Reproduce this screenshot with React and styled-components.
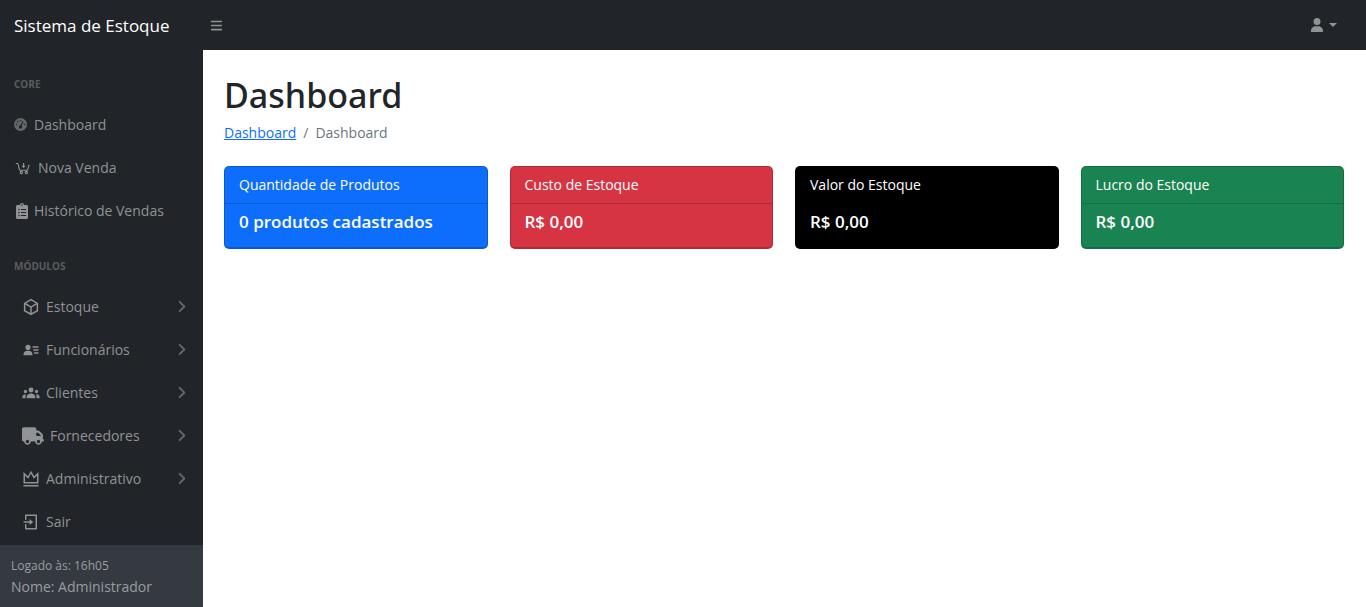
import React from "react";
import styled, { createGlobalStyle } from "styled-components";
import { FaUser, FaBars, FaAngleRight, FaGaugeHigh, FaTruck } from "react-icons/fa6";
import { FaClipboardList } from "react-icons/fa";
import { RiLoginBoxLine, RiBox3Line } from "react-icons/ri";
import { BiSolidUserDetail } from "react-icons/bi";
import { LiaCartArrowDownSolid } from "react-icons/lia";

const Global = createGlobalStyle`
  *, *::before, *::after { box-sizing: border-box; }
  body {
    margin: 0;
    background: #fff;
    color: #212529;
    font: 400 14px/22px "Open Sans", "Segoe UI", sans-serif;
  }
`;

const Page = styled.div`
  min-height: 100vh;
  display: grid;
  grid-template-columns: 203px 1fr;
  grid-template-rows: 50px 1fr;
`;

const TopBar = styled.header`
  grid-column: 1 / -1;
  display: flex;
  align-items: center;
  padding-right: 22px;
  background: #212529;
  color: #909294;
`;

const Brand = styled.a`
  width: 203px;
  padding: 1px 0 0 14px;
  color: #fff;
  font-size: 17px;
  line-height: 26px;
  text-decoration: none;
`;

const BarButton = styled.button`
  display: flex;
  align-items: center;
  gap: 5px;
  padding: 7px;
  margin-left: ${(p) => (p.$end ? "auto" : "0")};
  border: 0;
  background: none;
  color: inherit;
  font-size: ${(p) => (p.$end ? 14 : 13)}px;
  cursor: pointer;
`;

const Caret = styled.span`
  border: 4px solid transparent;
  border-top-color: currentColor;
  border-bottom: 0;
`;

const SideNav = styled.aside`
  display: flex;
  flex-direction: column;
  background: #212529;
  color: #909294;
`;

const Menu = styled.nav`
  flex: 1;
`;

const MenuHeading = styled.h2`
  margin: 0;
  padding: 26px 14px 11px;
  color: #595c5f;
  font-size: 10px;
  font-weight: 700;
  line-height: 16px;
  text-transform: uppercase;
`;

const MenuList = styled.ul`
  margin: 0;
  padding: 0;
  list-style: none;
`;

const MenuLink = styled.a`
  display: flex;
  align-items: center;
  gap: 6px;
  height: 43px;
  padding: 0 14px 0 ${(p) => (p.$nested ? 22 : 14)}px;
  color: inherit;
  text-decoration: none;
`;

const IconBox = styled.span`
  display: flex;
  flex: none;
  width: ${(p) => p.$width}px;
  font-size: ${(p) => p.$size}px;
  color: ${(p) => (p.$dim ? "#65686b" : "inherit")};

  svg {
    flex: none;
  }
`;

const Chevron = styled(FaAngleRight)`
  margin-left: auto;
  color: #65686b;
  font-size: 15px;
`;

const SideFooter = styled.footer`
  padding: 10px 11px;
  background: #343a40;
  color: #999da0;
  line-height: 21px;
`;

const LoginTime = styled.div`
  font-size: 12px;
`;

const Main = styled.main`
  padding: 22px 22px 0 21px;
`;

const Title = styled.h1`
  margin: 0;
  font-family: "Noto Sans", "Open Sans", sans-serif;
  font-size: 34px;
  font-weight: 500;
  line-height: 46px;
`;

const Breadcrumb = styled.ol`
  display: flex;
  gap: 7px;
  margin: 4px 0 22px;
  padding: 0;
  list-style: none;
  color: #6c757d;
`;

const CrumbLink = styled.a`
  color: #0d6efd;
`;

const Cards = styled.div`
  display: grid;
  grid-template-columns: repeat(4, 1fr);
  gap: 22px;
`;

const Card = styled.section`
  border: 1px solid rgba(0, 0, 0, 0.18);
  border-bottom-width: 2px;
  border-radius: 5px;
  background: ${(p) => p.$color};
  color: #fff;
`;

const CardHeader = styled.h2`
  margin: 0;
  padding: 7px 14px;
  border-bottom: 1px solid rgba(0, 0, 0, 0.18);
  font-size: 14px;
  font-weight: 400;
  line-height: 22px;
`;

const CardValue = styled.p`
  margin: 0;
  padding: 7px 14px 14px;
  font-size: 17px;
  font-weight: 600;
  line-height: 22px;
`;

function CrownIcon(props) {
  return (
    <svg width="1em" height="1em" viewBox="0 0 24 24" fill="none" stroke="currentColor" strokeWidth="2" {...props}>
      <path d="M3 5l5 5 4-7 4 7 5-5v12H3z" />
      <path d="M2 21h20" />
    </svg>
  );
}

function PeopleIcon(props) {
  return (
    <svg width="1em" height="1em" viewBox="0 0 24 24" fill="currentColor" {...props}>
      <circle cx="12" cy="8" r="3.3" />
      <circle cx="4.6" cy="10" r="2.2" />
      <circle cx="19.4" cy="10" r="2.2" />
      <path d="M6.3 19v-2.2c0-2.6 2.3-4.3 5.7-4.3s5.7 1.7 5.7 4.3V19z" />
      <path d="M.6 19v-2c0-2 1.6-3.4 4.7-3.4-.4.8-.6 1.7-.6 2.9V19z" />
      <path d="M23.4 19v-2c0-2-1.6-3.4-4.7-3.4.4.8.6 1.7.6 2.900V19z" />
    </svg>
  );
}

const coreItems = [
  { label: "Dashboard", icon: FaGaugeHigh, size: 13, width: 14, dim: true },
  { label: "Nova Venda", icon: LiaCartArrowDownSolid, size: 18, width: 18 },
  { label: "Histórico de Vendas", icon: FaClipboardList, size: 16, width: 14 },
];

const moduleItems = [
  { label: "Estoque", icon: RiBox3Line, size: 18, width: 18, more: true },
  { label: "Funcionários", icon: BiSolidUserDetail, size: 18, width: 18, more: true },
  { label: "Clientes", icon: PeopleIcon, size: 18, width: 18, more: true },
  { label: "Fornecedores", icon: FaTruck, size: 22, width: 22, more: true },
  { label: "Administrativo", icon: CrownIcon, size: 18, width: 18, more: true },
  { label: "Sair", icon: RiLoginBoxLine, size: 18, width: 18 },
];

const cards = [
  { title: "Quantidade de Produtos", value: "0 produtos cadastrados", color: "#0d6efd" },
  { title: "Custo de Estoque", value: "R$ 0,00", color: "#d63343" },
  { title: "Valor do Estoque", value: "R$ 0,00", color: "#000" },
  { title: "Lucro do Estoque", value: "R$ 0,00", color: "#198451" },
];

function MenuSection({ title, items, nested }) {
  return (
    <>
      <MenuHeading>{title}</MenuHeading>
      <MenuList>
        {items.map(({ label, icon: Icon, size, width, dim, more }) => (
          <li key={label}>
            <MenuLink href="#" $nested={nested}>
              <IconBox $size={size} $width={width} $dim={dim}>
                <Icon aria-hidden="true" />
              </IconBox>
              {label}
              {more && <Chevron aria-hidden="true" />}
            </MenuLink>
          </li>
        ))}
      </MenuList>
    </>
  );
}

export default function App() {
  return (
    <>
      <Global />
      <Page>
        <TopBar>
          <Brand href="#">Sistema de Estoque</Brand>
          <BarButton type="button" aria-label="Alternar menu">
            <FaBars />
          </BarButton>
          <BarButton type="button" aria-label="Conta" $end>
            <FaUser />
            <Caret />
          </BarButton>
        </TopBar>
        <SideNav>
          <Menu>
            <MenuSection title="Core" items={coreItems} />
            <MenuSection title="Módulos" items={moduleItems} nested />
          </Menu>
          <SideFooter>
            <LoginTime>Logado às: 16h05</LoginTime>
            <div>Nome: Administrador</div>
          </SideFooter>
        </SideNav>
        <Main>
          <Title>Dashboard</Title>
          <Breadcrumb>
            <li>
              <CrumbLink href="#">Dashboard</CrumbLink>
            </li>
            <li aria-hidden="true">/</li>
            <li>Dashboard</li>
          </Breadcrumb>
          <Cards>
            {cards.map((card) => (
              <Card key={card.title} $color={card.color}>
                <CardHeader>{card.title}</CardHeader>
                <CardValue>{card.value}</CardValue>
              </Card>
            ))}
          </Cards>
        </Main>
      </Page>
    </>
  );
}
